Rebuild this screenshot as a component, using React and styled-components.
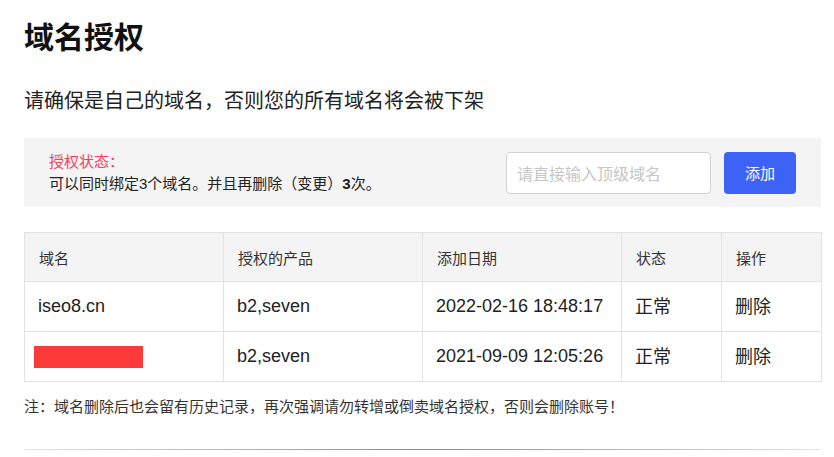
import React from 'react';
import styled, { createGlobalStyle } from 'styled-components';

const GlobalStyle = createGlobalStyle`
  html, body {
    margin: 0;
    padding: 0;
    background: #fff;
  }
  body {
    font-family: 'Liberation Sans', 'Noto Sans CJK SC', sans-serif;
    color: #222;
  }
`;

const cjkFont = `'Noto Sans CJK SC', 'Liberation Sans', sans-serif`;

const Page = styled.div`
  padding: 14px 13px 0 24px;
  width: 834px;
  box-sizing: border-box;
`;

const Title = styled.h1`
  margin: 0;
  font-family: ${cjkFont};
  font-size: 30px;
  line-height: 42px;
  font-weight: 700;
  color: #111;
`;

const Subtitle = styled.p`
  margin: 30px 0 0;
  font-family: ${cjkFont};
  font-size: 20px;
  line-height: 28px;
  color: #222;
`;

const StatusBar = styled.div`
  margin-top: 24px;
  height: 69px;
  background: #f4f4f4;
  display: flex;
  align-items: center;
  justify-content: space-between;
  padding: 0 25px;
  box-sizing: border-box;
`;

const StatusText = styled.div`
  font-size: 15px;
  line-height: 22px;
  margin-top: 1px;
`;

const StatusLabel = styled.div`
  color: #f5415a;
`;

const StatusDesc = styled.div`
  color: #222;
  b {
    font-weight: 700;
  }
`;

const AddForm = styled.div`
  display: flex;
  align-items: center;
  gap: 13px;
`;

const DomainInput = styled.input`
  width: 205px;
  height: 42px;
  box-sizing: border-box;
  border: 1px solid #d2d2d2;
  border-radius: 4px;
  padding: 0 10px;
  font-size: 16px;
  font-family: ${cjkFont};
  background: #fff;
  outline: none;
  &::placeholder {
    color: #c6c6c6;
  }
`;

const AddButton = styled.button`
  width: 72px;
  height: 42px;
  border: 0;
  border-radius: 4px;
  background: #3d63f6;
  color: #fff;
  font-size: 15px;
  font-family: ${cjkFont};
  cursor: pointer;
`;

const Table = styled.table`
  margin-top: 25px;
  width: 797px;
  border-collapse: collapse;
  table-layout: fixed;
`;

const HeadCell = styled.th`
  height: 48px;
  padding: 0 14px;
  background: #f4f4f4;
  border: 1px solid #e2e2e2;
  text-align: left;
  font-family: ${cjkFont};
  font-weight: 400;
  font-size: 15px;
  color: #333;
`;

const Cell = styled.td`
  height: 49px;
  padding: 0 13px;
  border: 1px solid #e2e2e2;
  font-size: 18px;
  color: #222;
  white-space: nowrap;
  ${(p) =>
    p.$cjk ? `font-family: ${cjkFont}; height: 45px; padding-bottom: 4px;` : ''}
`;

const Redacted = styled.span`
  display: block;
  width: 109px;
  height: 22px;
  margin-left: -4px;
  background: #fc3a3a;
`;

const Note = styled.p`
  margin: 14px 0 0;
  font-family: ${cjkFont};
  font-size: 15px;
  line-height: 20px;
  color: #333;
`;

const Divider = styled.div`
  margin-top: 33px;
  height: 1px;
  background: linear-gradient(90deg, #e4e4e4 0%, #8a8a8a 50%, #e4e4e4 100%);
`;

const rows = [
  { domain: 'iseo8.cn', products: 'b2,seven', date: '2022-02-16 18:48:17', status: '正常' },
  { domain: null, products: 'b2,seven', date: '2021-09-09 12:05:26', status: '正常' },
];

const widths = [199, 199, 199, 100, 100];

export default function App() {
  return (
    <>
      <GlobalStyle />
      <Page>
        <Title>域名授权</Title>
        <Subtitle>请确保是自己的域名，否则您的所有域名将会被下架</Subtitle>

        <StatusBar>
          <StatusText>
            <StatusLabel>授权状态：</StatusLabel>
            <StatusDesc>
              可以同时绑定3个域名。并且再删除（变更）<b>3</b>次。
            </StatusDesc>
          </StatusText>
          <AddForm>
            <DomainInput placeholder="请直接输入顶级域名" />
            <AddButton>添加</AddButton>
          </AddForm>
        </StatusBar>

        <Table>
          <colgroup>
            {widths.map((w, i) => (
              <col key={i} style={{ width: w }} />
            ))}
          </colgroup>
          <thead>
            <tr>
              <HeadCell>域名</HeadCell>
              <HeadCell>授权的产品</HeadCell>
              <HeadCell>添加日期</HeadCell>
              <HeadCell>状态</HeadCell>
              <HeadCell>操作</HeadCell>
            </tr>
          </thead>
          <tbody>
            {rows.map((r, i) => (
              <tr key={i}>
                <Cell>{r.domain ? r.domain : <Redacted />}</Cell>
                <Cell>{r.products}</Cell>
                <Cell>{r.date}</Cell>
                <Cell $cjk>{r.status}</Cell>
                <Cell $cjk>删除</Cell>
              </tr>
            ))}
          </tbody>
        </Table>

        <Note>注：域名删除后也会留有历史记录，再次强调请勿转增或倒卖域名授权，否则会删除账号！</Note>
        <Divider />
      </Page>
    </>
  );
}
